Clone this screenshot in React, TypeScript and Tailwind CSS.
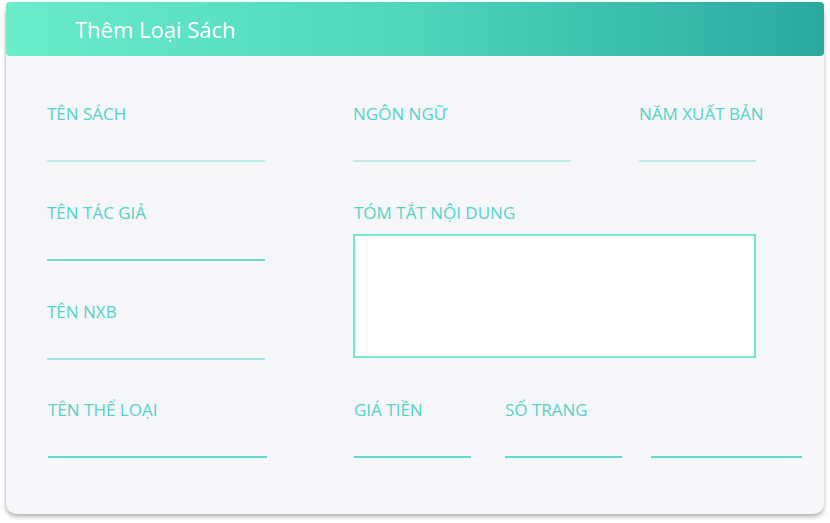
import React from "react";

const font = { fontFamily: '"Open Sans", "Noto Sans", sans-serif' };

function Field({ label, width, line }: { label: string; width: string; line: string }) {
  return (
    <div className={`flex flex-col ${width}`}>
      <div className="h-[24px] leading-[24px] text-[17px] text-[#55d2c6] whitespace-nowrap">{label}</div>
      <div className={`mt-[34px] h-[2px] w-full ${line}`} />
    </div>
  );
}

export default function App() {
  return (
    <div className="w-[830px] h-[523px] bg-white pt-[2px] pl-[6px]" style={font}>
      <div className="w-[818px] h-[512px] bg-[#f5f6fa] rounded-[10px] shadow-[0_3px_4px_rgba(0,0,0,0.28),-1px_0_2px_rgba(0,0,0,0.08)] flex flex-col">
        <div className="h-[54px] rounded-[4px] bg-gradient-to-r from-[#6aecc9] via-[#4dd6bc] to-[#2ba99f] flex items-center pl-[69px]">
          <span className="text-white text-[22px] leading-none">Thêm Loại Sách</span>
        </div>

        <div className="flex pt-[46px]">
          <div className="ml-[40px] w-[220px] flex flex-col gap-[39px]">
            <Field label="TÊN SÁCH" width="w-[218px] ml-[1px]" line="bg-[#bfe9e6]" />
            <Field label="TÊN TÁC GIẢ" width="w-[218px] ml-[1px]" line="bg-[#6cd9cf]" />
            <Field label="TÊN NXB" width="w-[218px] ml-[1px]" line="bg-[#a3e3dd]" />
          </div>

          <div className="ml-[87px] w-[403px] flex flex-col">
            <div className="flex justify-between">
              <Field label="NGÔN NGỮ" width="w-[218px]" line="bg-[#bfe9e6]" />
              <Field label="NĂM XUẤT BẢN" width="w-[117px]" line="bg-[#bfe9e6]" />
            </div>
            <div className="mt-[39px] h-[24px] leading-[24px] text-[17px] text-[#55d2c6] pl-[1px]">TÓM TẮT NỘI DUNG</div>
            <div className="mt-[9px] h-[124px] w-[403px] bg-white border-2 border-[#72e8cd]" />
          </div>
        </div>

        <div className="flex mt-[38px] items-start">
          <div className="ml-[41px] w-[220px]">
            <Field label="TÊN THỂ LOẠI" width="w-[219px] ml-[1px]" line="bg-[#62d9cf]" />
          </div>
          <div className="ml-[87px]">
            <Field label="GIÁ TIỀN" width="w-[117px]" line="bg-[#62d9cf]" />
          </div>
          <div className="ml-[34px]">
            <Field label="SỐ TRANG" width="w-[117px]" line="bg-[#62d9cf]" />
          </div>
          <div className="ml-[29px]">
            <Field label="" width="w-[151px]" line="bg-[#62d9cf]" />
          </div>
        </div>
      </div>
    </div>
  );
}
